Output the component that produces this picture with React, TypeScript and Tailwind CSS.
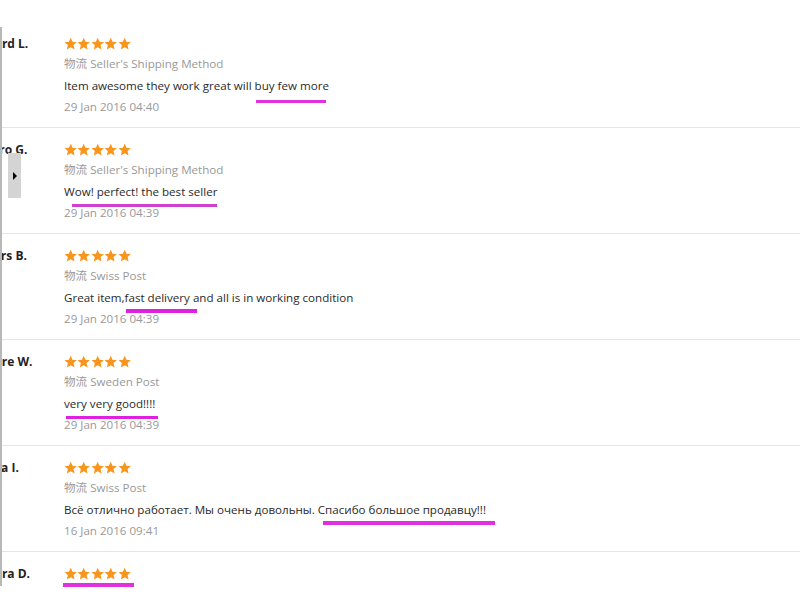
import React from "react";

type Row = {
  name: string;
  nameCls: string;
  ship: string;
  comment: string;
  date: string;
  first?: boolean;
  arrow?: boolean;
};

const rows: Row[] = [
  { name: "Richard L.", nameCls: "ml-[-33px]", ship: "Seller's Shipping Method", comment: "Item awesome they work great will buy few more", date: "29 Jan 2016 04:40", first: true },
  { name: "Pedro G.", nameCls: "ml-[-25px]", ship: "Seller's Shipping Method", comment: "Wow! perfect! the best seller", date: "29 Jan 2016 04:39", arrow: true },
  { name: "Anders B.", nameCls: "ml-[-32px]", ship: "Swiss Post", comment: "Great item,fast delivery and all is in working condition", date: "29 Jan 2016 04:39" },
  { name: "Pierre W.", nameCls: "ml-[-24px]", ship: "Sweden Post", comment: "very very good!!!!", date: "29 Jan 2016 04:39" },
  { name: "Anna I.", nameCls: "ml-[-25px]", ship: "Swiss Post", comment: "Всё отлично работает. Мы очень довольны. Спасибо большое продавцу!!!", date: "16 Jan 2016 09:41" },
  { name: "Vera D.", nameCls: "ml-[-15px]", ship: "", comment: "", date: "" },
];

function Star() {
  return (
    <svg width="13.4" height="13.4" viewBox="0 0 24 24" className="shrink-0">
      <path
        d="M12 1.2l3.2 7.3 7.9.7-6 5.3 1.8 7.8L12 18.2l-6.9 4.1 1.8-7.8-6-5.3 7.9-.7z"
        fill="#f8951d"
      />
    </svg>
  );
}

function Stars() {
  return (
    <div className="flex h-[21px] items-center">
      <Star />
      <Star />
      <Star />
      <Star />
      <Star />
    </div>
  );
}

export default function App() {
  return (
    <div
      className="relative h-[600px] w-[800px] overflow-hidden bg-white text-[11.6px] text-[#333]"
      style={{ fontFamily: '"Open Sans", "Noto Sans CJK SC", sans-serif' }}
    >
      <div className="pt-[27px]">
        <div className="border-l-2 border-[#b8b8b8]">
          {rows.map((r, i) => (
            <div
              key={i}
              className={`relative flex ${r.first ? "pt-[6px]" : "border-t border-[#e6e6e6] pt-[11px]"} ${i === rows.length - 1 ? "h-[35px]" : "pb-[10px]"}`}
            >
              <div className="w-[62px] shrink-0 overflow-hidden">
                <div className={`whitespace-nowrap text-[12px] font-bold leading-[21px] text-[#222] ${r.nameCls}`}>
                  {r.name}
                </div>
              </div>
              <div className="flex flex-col">
                <Stars />
                {r.ship && (
                  <>
                    <div className="leading-[19px] text-[#999]">
                      物流 {r.ship}
                    </div>
                    <div className="mt-[2px] leading-[21px] text-[#2a2a2a]">{r.comment}</div>
                    <div className="leading-[21px] text-[#999]">{r.date}</div>
                  </>
                )}
              </div>
              {r.arrow && (
                <div className="absolute left-[6px] top-[25px] flex h-[45px] w-[13px] items-center justify-center bg-[#d4d4d4]">
                  <div className="h-0 w-0 border-y-[4px] border-l-[4px] border-y-transparent border-l-black" />
                </div>
              )}
            </div>
          ))}
        </div>
      </div>

      {/* annotation underlines */}
      <div className="absolute left-[256px] top-[100px] h-[3px] w-[70px] bg-[#e030e0]" />
      <div className="absolute left-[72px] top-[204px] h-[3px] w-[145px] bg-[#d040d0]" />
      <div className="absolute left-[126px] top-[309px] h-[4px] w-[71px] bg-[#e020e0]" />
      <div className="absolute left-[66px] top-[416px] h-[3px] w-[92px] bg-[#e020e0]" />
      <div className="absolute left-[323px] top-[521px] h-[4px] w-[172px] bg-[#e030e0]" />
      <div className="absolute left-[63px] top-[583px] h-[4px] w-[71px] bg-[#e030e0]" />
    </div>
  );
}
